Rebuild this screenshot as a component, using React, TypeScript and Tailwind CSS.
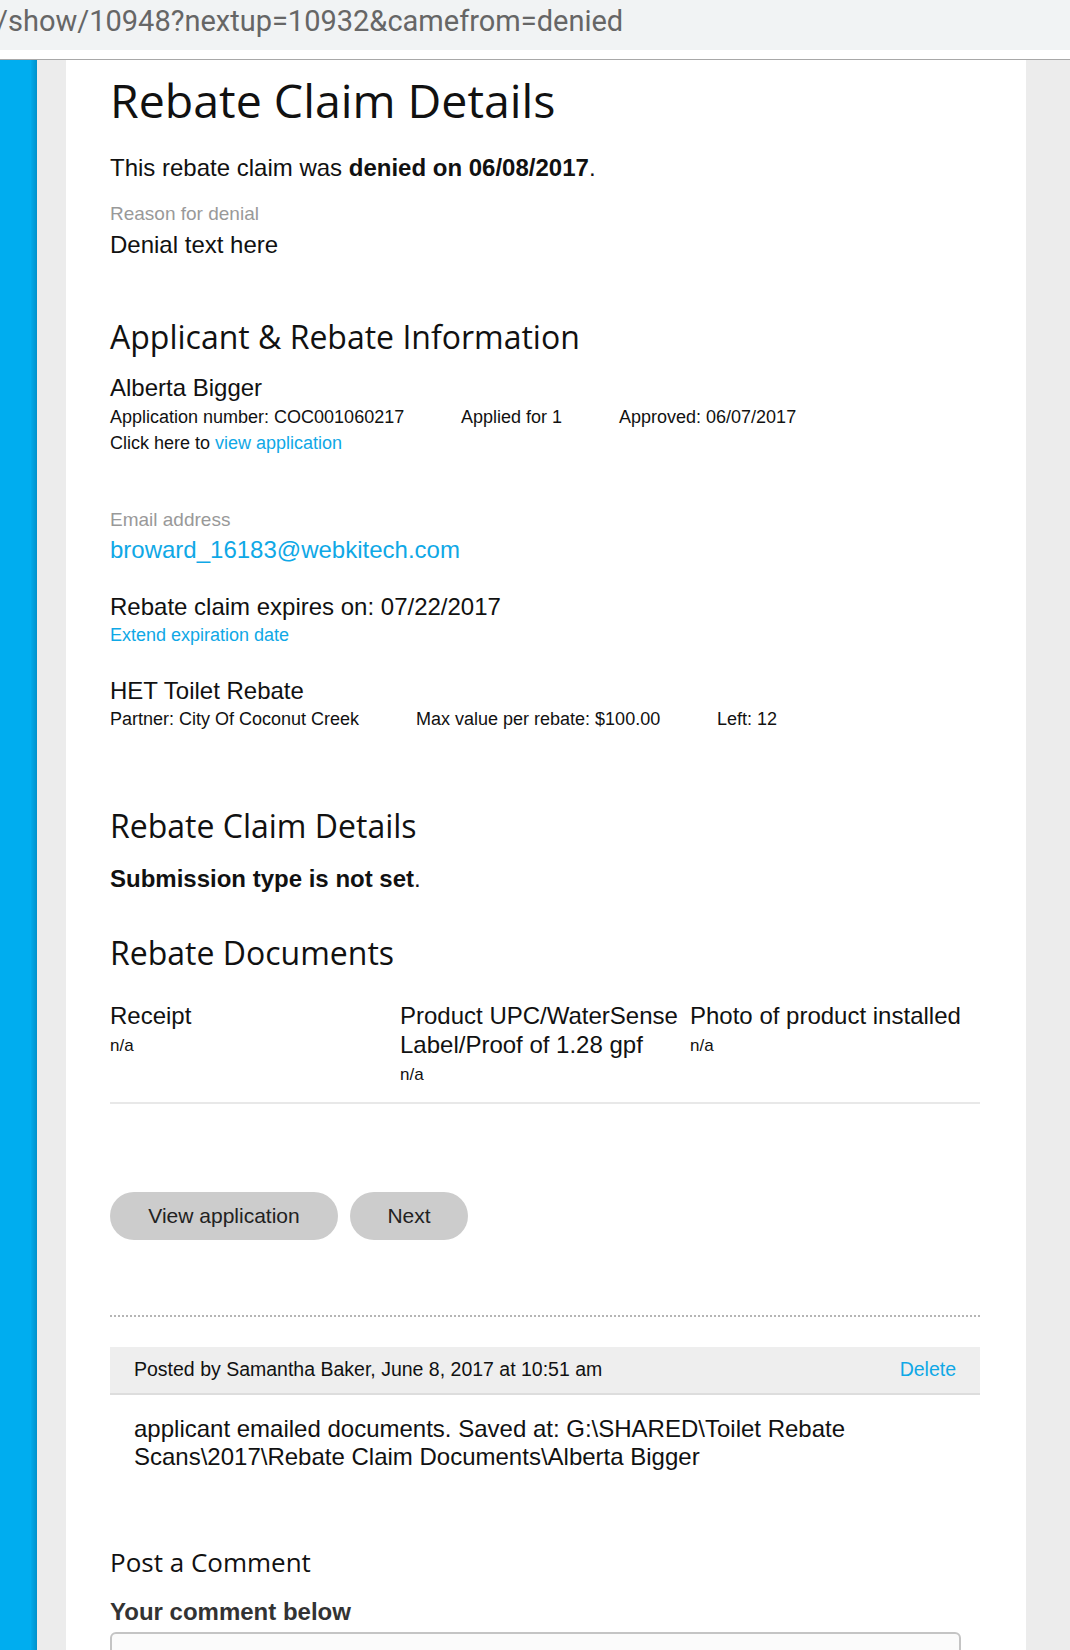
import React from "react";

const heading = "font-['Open_Sans','Noto_Sans',sans-serif] font-normal text-[#111]";

export default function App() {
  return (
    <div className="w-[1070px] min-h-[1650px] overflow-hidden bg-white font-['Liberation_Sans',Arial,sans-serif] text-[#111]">
      <div className="h-[50px] overflow-hidden whitespace-nowrap bg-[#f1f3f4] pt-[3px]">
        <div className="ml-[-4px] font-['Roboto',sans-serif] text-[29px] leading-[36px] text-[#666]">
          /show/10948?nextup=10932&amp;camefrom=denied
        </div>
      </div>
      <div className="h-[9px] bg-white" />
      <div className="h-px bg-[#a8a8a8]" />
      <div className="flex">
        <div className="w-[31px] shrink-0 bg-[#00adef]" />
        <div className="w-[6px] shrink-0 bg-linear-to-r from-[#00a9ea] to-[#0091cb]" />
        <div className="w-[29px] shrink-0 bg-[#ececec]" />
        <main className="w-[960px] shrink-0 bg-white pl-[44px] pr-[46px] pb-[40px]">
          <h1 className={`${heading} mt-[12px] text-[46.5px] leading-[56px]`}>Rebate Claim Details</h1>
          <p className="mt-[26px] text-[24px] leading-[28px]">
            This rebate claim was <b className="font-bold">denied on 06/08/2017</b>.
          </p>
          <div className="mt-[21px] text-[19px] leading-[22px] text-[#999]">Reason for denial</div>
          <div className="mt-[6px] text-[24px] leading-[28px]">Denial text here</div>

          <h2 className={`${heading} mt-[58px] text-[32px] leading-[40px]`}>Applicant &amp; Rebate Information</h2>
          <div className="mt-[17px] text-[24px] leading-[28px]">Alberta Bigger</div>
          <div className="mt-[2px] flex text-[18px] leading-[26px]">
            <span className="w-[351px]">Application number: COC001060217</span>
            <span className="w-[158px]">Applied for 1</span>
            <span>Approved: 06/07/2017</span>
          </div>
          <div className="text-[18px] leading-[26px]">
            Click here to <a className="text-[#0fa8e6]">view application</a>
          </div>

          <div className="mt-[53px] text-[19px] leading-[22px] text-[#999]">Email address</div>
          <div className="mt-[5px] text-[24px] leading-[28px] text-[#0fa8e6]">broward_16183@webkitech.com</div>

          <div className="mt-[29px] text-[24px] leading-[28px]">Rebate claim expires on: 07/22/2017</div>
          <div className="mt-[1px] text-[18px] leading-[26px] text-[#0fa8e6]">Extend expiration date</div>

          <div className="mt-[29px] text-[24px] leading-[28px]">HET Toilet Rebate</div>
          <div className="mt-[1px] flex text-[18px] leading-[26px]">
            <span className="w-[306px]">Partner: City Of Coconut Creek</span>
            <span className="w-[301px]">Max value per rebate: $100.00</span>
            <span>Left: 12</span>
          </div>

          <h2 className={`${heading} mt-[74px] text-[32px] leading-[40px]`}>Rebate Claim Details</h2>
          <p className="mt-[19px] text-[24px] leading-[28px]">
            <b className="font-bold">Submission type is not set</b>.
          </p>

          <h2 className={`${heading} mt-[40px] text-[32px] leading-[40px]`}>Rebate Documents</h2>
          <div className="mt-[28px] grid grid-cols-3 border-b-2 border-[#e8e8e8] pb-[13px]">
            <div>
              <div className="text-[24px] leading-[29px]">Receipt</div>
              <div className="mt-[2px] text-[17px] leading-[28px]">n/a</div>
            </div>
            <div>
              <div className="text-[24px] leading-[29px]">Product UPC/WaterSense Label/Proof of 1.28 gpf</div>
              <div className="mt-[2px] text-[17px] leading-[28px]">n/a</div>
            </div>
            <div>
              <div className="text-[24px] leading-[29px]">Photo of product installed</div>
              <div className="mt-[2px] text-[17px] leading-[28px]">n/a</div>
            </div>
          </div>

          <div className="mt-[88px] flex gap-[12px]">
            <button className="h-[48px] w-[228px] rounded-full bg-[#cccccc] text-[21px] text-[#222]">View application</button>
            <button className="h-[48px] w-[118px] rounded-full bg-[#cccccc] text-[21px] text-[#222]">Next</button>
          </div>

          <div className="mt-[75px] border-t-2 border-dotted border-[#b5b5b5]" />

          <div className="mt-[30px] flex justify-between border-b-2 border-[#dddddd] bg-[#eeeeee] px-[24px] pb-[11px] pt-[9px] text-[19.5px] leading-[26px]">
            <span>Posted by Samantha Baker, June 8, 2017 at 10:51 am</span>
            <a className="text-[#0fa8e6]">Delete</a>
          </div>
          <div className="px-[24px] pt-[20px] text-[24px] leading-[28px]">
            applicant emailed documents. Saved at: G:\SHARED\Toilet Rebate Scans\2017\Rebate Claim Documents\Alberta Bigger
          </div>

          <h2 className={`${heading} mt-[74px] text-[26px] leading-[34px]`}>Post a Comment</h2>
          <div className="mt-[19px] text-[24px] font-bold leading-[28px] text-[#333]">Your comment below</div>
          <textarea className="mt-[6px] block h-[130px] w-[851px] rounded-[6px] border-2 border-[#c4c4c4] bg-[#fbfbfb]" />
        </main>
        <div className="flex-1 bg-[#ececec]" />
      </div>
    </div>
  );
}
